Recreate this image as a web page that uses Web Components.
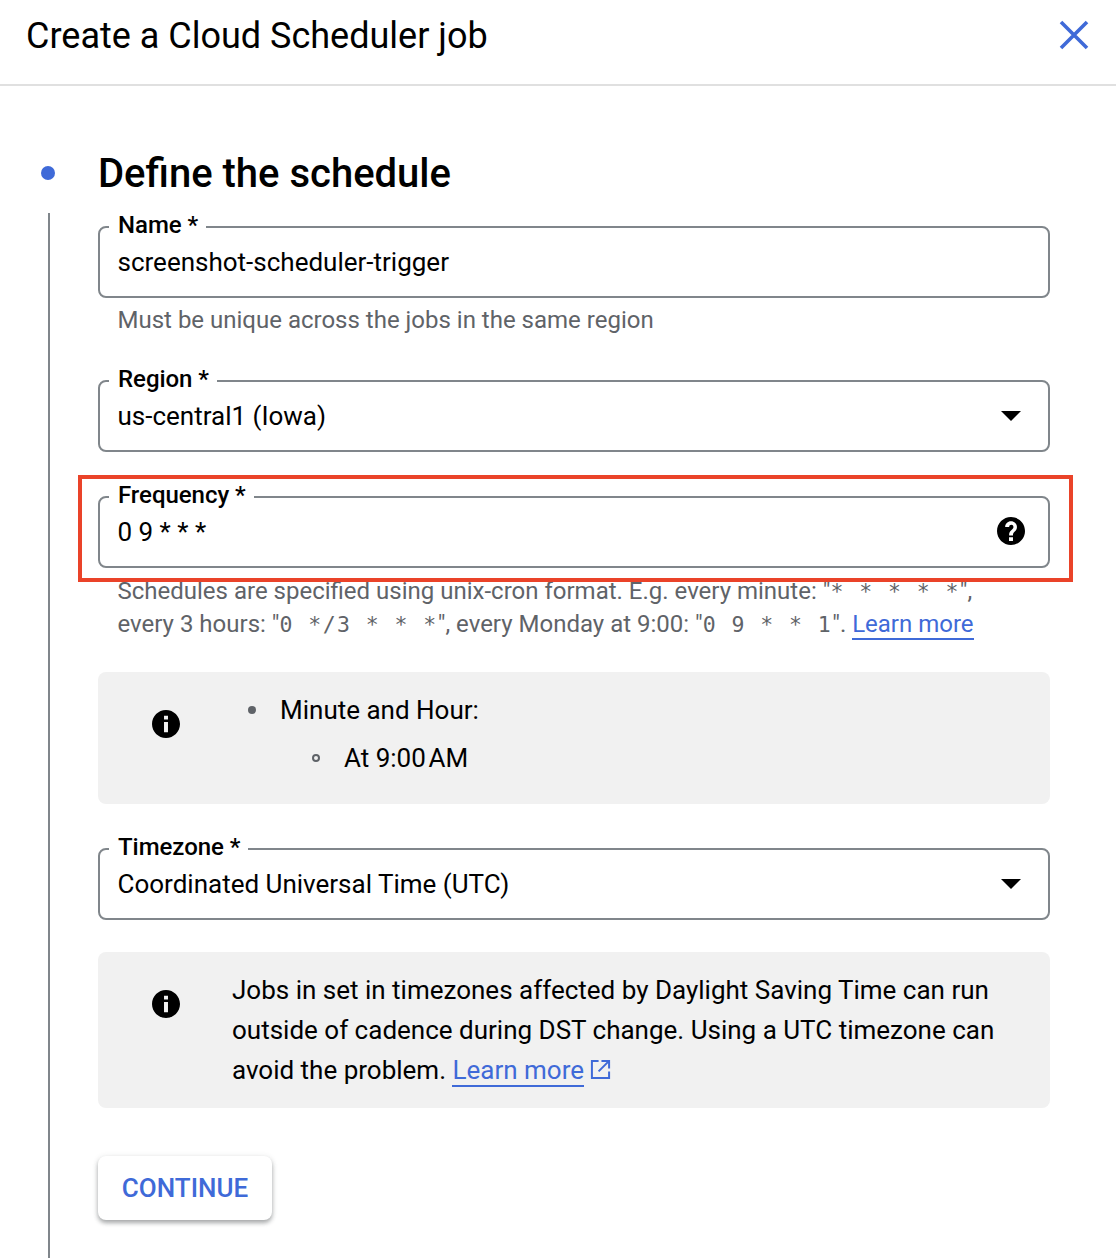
<!DOCTYPE html>
<html>
<head>
<meta charset="utf-8">
<style>
  html, body { margin: 0; padding: 0; background: #fff; }
  body { font-family: Roboto, "Liberation Sans", sans-serif; color: #000; height: 1258px; overflow: hidden; }
  x-hint code { font-family: "DejaVu Sans Mono", monospace; font-size: 21.5px; letter-spacing: 1.44px; }
</style>
</head>
<body>
<x-app>
  <x-dialog-header>Create a Cloud Scheduler job</x-dialog-header>
  <x-step heading="Define the schedule">
    <x-field label="Name" value="screenshot-scheduler-trigger" style="margin-top:27px"></x-field>
    <x-hint style="margin-top:6px">Must be unique across the jobs in the same region</x-hint>
    <x-field label="Region" value="us-central1 (Iowa)" icon="arrow" style="margin-top:43px"></x-field>
    <x-field label="Frequency" value="0 9 * * *" icon="help" highlighted style="margin-top:44px"></x-field>
    <x-hint style="margin-top:7px">Schedules are specified using unix-cron format. E.g. every minute: "<code>* * * * *</code>",<br>every 3 hours: "<code>0 */3 * * *</code>", every Monday at 9:00: "<code>0 9 * * 1</code>". <x-link>Learn more</x-link></x-hint>
    <x-info style="margin-top:31px;height:132px">
      <x-bullets>
        <span>Minute and Hour:</span>
        <span slot="sub">At 9:00&#8202;AM</span>
      </x-bullets>
    </x-info>
    <x-field label="Timezone" value="Coordinated Universal Time (UTC)" icon="arrow" style="margin-top:44px"></x-field>
    <x-info style="margin-top:32px;height:156px">
      Jobs in set in timezones affected by Daylight Saving Time can run<br>outside of cadence during DST change. Using a UTC timezone can<br>avoid the problem. <x-link external>Learn more</x-link>
    </x-info>
    <x-button style="margin-top:48px">CONTINUE</x-button>
  </x-step>
</x-app>

<script>
const BLUE = '#3f6ad8'

class XApp extends HTMLElement {
  constructor() {
    super()
    this.attachShadow({ mode: 'open' })
    this.shadowRoot.innerHTML = `
      <style>
        :host { display: block; width: 1116px; height: 1258px; overflow: hidden; background: #fff; }
      </style>
      <slot></slot>`
  }
}

class XDialogHeader extends HTMLElement {
  constructor() {
    super()
    this.attachShadow({ mode: 'open' })
    this.shadowRoot.innerHTML = `
      <style>
        :host { display: flex; align-items: center; justify-content: space-between; box-sizing: border-box; height: 86px; padding: 0 24px 12px 26px; border-bottom: 2px solid #e0e0e0; }
        h1 { margin: 0; font: 400 36px/44px Roboto, sans-serif; color: #000; }
        svg { display: block; margin-top: -2px; }
      </style>
      <h1><slot></slot></h1>
      <svg width="36" height="36" viewBox="0 0 36 36"><path d="M5 5 L31 31 M31 5 L5 31" stroke="${BLUE}" stroke-width="3.6" fill="none"/></svg>`
  }
}

class XStep extends HTMLElement {
  constructor() {
    super()
    this.attachShadow({ mode: 'open' })
    this.shadowRoot.innerHTML = `
      <style>
        :host { display: grid; grid-template-columns: 98px 952px; grid-template-rows: auto 1fr; height: 1172px; }
        .dot { width: 14px; height: 14px; border-radius: 50%; background: ${BLUE}; margin: 80px 0 0 41px; }
        h2 { margin: 0; padding-top: 63px; font: 500 40px/50px Roboto, sans-serif; color: #000; }
        .rail { border-left: 2px solid #80868b; margin: 14px 0 0 48px; }
        .body { display: block; }
      </style>
      <div class="dot"></div>
      <h2>${this.getAttribute('heading')}</h2>
      <div class="rail"></div>
      <div class="body"><slot></slot></div>`
  }
}

const FIELD_ICONS = {
  arrow: `<svg width="20" height="10" viewBox="0 0 20 10"><path d="M0 0 H20 L10 10 Z" fill="#000"/></svg>`,
  help: `<svg width="28" height="28" viewBox="0 0 24 24"><path d="M12 0C5.400 0 0 5.400 0 12s5.400 12 12 12 12-5.400 12-12S18.600 0 12 0zm1.700 20.500h-3.400v-3.200h3.400v3.200zm2.400-8.900l-1.300 1.300c-.9.900-1.100 1.500-1.100 3h-3.300v-.8c0-1.400.5-2.500 1.400-3.400l1.700-1.700c.4-.4.600-.9.600-1.500 0-1-.8-1.800-1.800-1.800s-1.900.8-1.900 1.800H7c0-2.800 2.200-4.900 5-4.900s5.100 2.100 5.100 4.900c0 1.200-.4 2.200-1 3.100z" fill="#000"/></svg>`
}

class XField extends HTMLElement {
  constructor() {
    super()
    this.attachShadow({ mode: 'open' })
    const icon = FIELD_ICONS[this.getAttribute('icon')] || ''
    this.shadowRoot.innerHTML = `
      <style>
        :host { display: block; position: relative; box-sizing: border-box; height: 72px; border: 2px solid #80868b; border-radius: 8px; }
        .wrap { display: flex; align-items: center; justify-content: space-between; height: 68px; padding: 0 27px 0 17.5px; font: 400 26px/36px Roboto, sans-serif; color: #000; }
        .label { position: absolute; left: 9px; top: -17px; padding: 0 8px 0 9px; background: #fff; font: 500 24px/28px Roboto, sans-serif; letter-spacing: -.04px; }
        :host([highlighted]) .wrap { align-items: flex-start; padding-top: 16px; height: 52px; }
        :host([highlighted]) svg { margin-top: 3px; margin-right: -4px; }
        :host([highlighted])::after { content: ''; position: absolute; left: -22px; right: -25px; top: -23px; bottom: -16px; border: 4px solid #ea4329; pointer-events: none; }
      </style>
      <span class="label">${this.getAttribute('label')} *</span>
      <div class="wrap"><span>${this.getAttribute('value')}</span>${icon}</div>`
  }
}

class XHint extends HTMLElement {
  constructor() {
    super()
    this.attachShadow({ mode: 'open' })
    this.shadowRoot.innerHTML = `
      <style>
        :host { display: block; padding-left: 19.5px; font: 400 24px/33px Roboto, sans-serif; color: #5f6368; }
      </style>
      <slot></slot>`
  }
}

class XLink extends HTMLElement {
  constructor() {
    super()
    this.attachShadow({ mode: 'open' })
    const ext = this.hasAttribute('external')
      ? `<svg width="21" height="21" viewBox="0 0 22 22" fill="none" stroke="${BLUE}" stroke-width="2.1"><path d="M9 2 H2 V20 H20 V13 M12 2 H20 V10 M20 2 L9 13"/></svg>` : ''
    this.shadowRoot.innerHTML = `
      <style>
        :host { display: inline; color: ${BLUE}; }
        a { color: inherit; text-decoration: none; border-bottom: 2px solid ${BLUE}; }
        svg { margin-left: 6px; vertical-align: -1px; }
      </style>
      <a><slot></slot></a>${ext}`
  }
}

class XInfo extends HTMLElement {
  constructor() {
    super()
    this.attachShadow({ mode: 'open' })
    this.shadowRoot.innerHTML = `
      <style>
        :host { display: grid; grid-template-columns: 134px 1fr; box-sizing: border-box; background: #f1f1f1; border-radius: 8px; padding-top: 18px; font: 400 26px/40px Roboto, sans-serif; color: #000; }
        svg { display: block; margin: 20px 0 0 54px; }
      </style>
      <svg width="28" height="28" viewBox="0 0 24 24"><path d="M12 0C5.400 0 0 5.400 0 12s5.400 12 12 12 12-5.400 12-12S18.600 0 12 0zm1.700 19h-3.400v-8.800h3.400V19zm0-10.800h-3.400V5h3.400v3.200z" fill="#000"/></svg>
      <div><slot></slot></div>`
  }
}

class XBullets extends HTMLElement {
  constructor() {
    super()
    this.attachShadow({ mode: 'open' })
    this.shadowRoot.innerHTML = `
      <style>
        :host { display: block; }
        .row { display: flex; align-items: center; height: 40px; }
        .sub { margin-top: 8px; padding-left: 64px; }
        .mark { width: 48px; flex: none; }
        .disc { display: block; width: 8px; height: 8px; border-radius: 50%; background: #5f6368; margin-left: 16px; }
        .circle { display: block; box-sizing: border-box; width: 8px; height: 8px; border-radius: 50%; border: 2px solid #5f6368; margin-left: 16px; }
      </style>
      <div class="row"><span class="mark"><i class="disc"></i></span><slot></slot></div>
      <div class="row sub"><span class="mark"><i class="circle"></i></span><slot name="sub"></slot></div>`
  }
}

class XButton extends HTMLElement {
  constructor() {
    super()
    this.attachShadow({ mode: 'open' })
    this.shadowRoot.innerHTML = `
      <style>
        :host { display: block; width: 174px; height: 64px; }
        button { width: 100%; height: 100%; border: 0; border-radius: 8px; background: #fff; color: ${BLUE}; font: 500 26px/64px Roboto, sans-serif; padding: 0; box-shadow: 0 3px 4px rgba(60,64,67,.4), 0 1px 6px rgba(60,64,67,.12); }
      </style>
      <button><slot></slot></button>`
  }
}

customElements.define('x-app', XApp)
customElements.define('x-dialog-header', XDialogHeader)
customElements.define('x-step', XStep)
customElements.define('x-field', XField)
customElements.define('x-hint', XHint)
customElements.define('x-link', XLink)
customElements.define('x-info', XInfo)
customElements.define('x-bullets', XBullets)
customElements.define('x-button', XButton)
</script>
</body>
</html>
